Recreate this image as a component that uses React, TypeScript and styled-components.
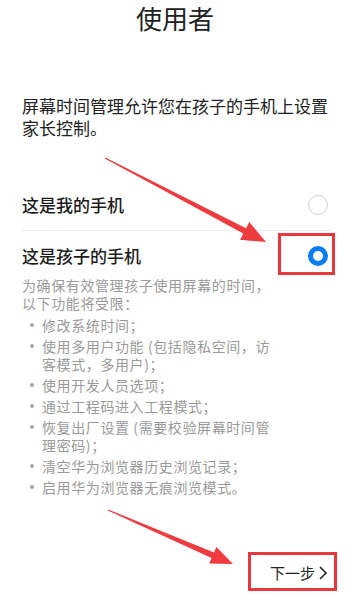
import styled, { createGlobalStyle } from 'styled-components';

const GlobalStyle = createGlobalStyle`
  html, body {
    margin: 0;
    padding: 0;
    background: #ffffff;
  }
  body {
    font-family: "Noto Sans CJK SC", "Noto Sans", sans-serif;
    color: #1c1c1c;
  }
`;

const restrictions = [
  '修改系统时间；',
  '使用多用户功能 (包括隐私空间，访客模式，多用户)；',
  '使用开发人员选项；',
  '通过工程码进入工程模式；',
  '恢复出厂设置 (需要校验屏幕时间管理密码)；',
  '清空华为浏览器历史浏览记录；',
  '启用华为浏览器无痕浏览模式。',
];

const App = () => {
  return (
    <Page>
      <GlobalStyle />
      <Title>使用者</Title>
      <Intro>屏幕时间管理允许您在孩子的手机上设置家长控制。</Intro>

      <OptionRow $height={50}>
        <OptionLabel>这是我的手机</OptionLabel>
        <Radio />
      </OptionRow>
      <Divider />
      <OptionRow $padTop={14}>
        <OptionLabel>这是孩子的手机</OptionLabel>
        <Radio $checked />
      </OptionRow>

      <Desc>为确保有效管理孩子使用屏幕的时间，以下功能将受限：</Desc>
      <List>
        {restrictions.map((item) => (
          <Item key={item}>{item}</Item>
        ))}
      </List>

      <Footer>
        <NextButton type="button">
          下一步
          <svg width="10" height="16" viewBox="0 0 10 16">
            <path d="M2 2 L8 8 L2 14" fill="none" stroke="#222" strokeWidth="1.6" />
          </svg>
        </NextButton>
      </Footer>

      <Marker style={{ left: 278, top: 233, width: 57, height: 42 }} />
      <Marker style={{ left: 248, top: 552, width: 89, height: 39 }} />
      <Arrows width="350" height="602" viewBox="0 0 350 602">
        {/* annotation arrows */}
        <polygon
          fill="#ee3b3f"
          points="105.3,157.5 246.1,228.2 249.3,222 266,242 240.1,239.8 243.3,233.6 104.7,158.5"
        />
        <polygon
          fill="#ee3b3f"
          points="108.2,509.4 214,552.5 216.4,547 233,564 209.2,563.6 211.6,558.1 107.8,510.6"
        />
      </Arrows>
    </Page>
  );
};

export default App;

const Page = styled.div`
  position: relative;
  display: flex;
  flex-direction: column;
  min-height: 100vh;
  box-sizing: border-box;
  overflow: hidden;
`;

const Title = styled.h1`
  margin: 0;
  font-size: 26px;
  font-weight: 400;
  line-height: 36px;
  text-align: center;
  color: #222;
`;

const Intro = styled.p`
  margin: 59px 18px 0 22px;
  font-size: 17px;
  line-height: 22px;
  color: #222;
`;

const OptionRow = styled.div<{ $height?: number; $padTop?: number }>`
  display: flex;
  align-items: center;
  justify-content: space-between;
  margin-top: ${(p) => (p.$height ? '41px' : '0')};
  height: ${(p) => (p.$height ? `${p.$height}px` : 'auto')};
  padding: ${(p) => p.$padTop ?? 0}px 22px 0 22px;
`;

const OptionLabel = styled.span`
  font-size: 17px;
  line-height: 22px;
  font-weight: 500;
  color: #1c1c1c;
`;

const Radio = styled.span<{ $checked?: boolean }>`
  box-sizing: border-box;
  width: 20px;
  height: 20px;
  border-radius: 50%;
  background: #fff;
  border: ${(p) => (p.$checked ? '5px solid #0a7cf6' : '1px solid #cfcfcf')};
`;

const Divider = styled.div`
  height: 1px;
  margin: 0 18px 0 22px;
  background: #ececec;
`;

const Desc = styled.p`
  margin: 9px 0 0 22px;
  width: 254px;
  font-size: 14px;
  line-height: 18px;
  letter-spacing: 0.6px;
  color: #9a9a9a;
`;

const List = styled.ul`
  margin: 4px 0 0 22px;
  padding: 0 0 0 20px;
  width: 234px;
  list-style: none;
`;

const Item = styled.li`
  position: relative;
  margin-bottom: 3px;
  font-size: 14px;
  line-height: 18px;
  letter-spacing: 0.6px;
  color: #9a9a9a;

  &::before {
    content: '';
    position: absolute;
    left: -12px;
    top: 7px;
    width: 4px;
    height: 4px;
    border-radius: 50%;
    background: #a8a8a8;
  }
`;

const Footer = styled.div`
  margin-top: auto;
  display: flex;
  justify-content: flex-end;
  padding: 0 22px 18px 0;
`;

const NextButton = styled.button`
  display: flex;
  align-items: center;
  gap: 3px;
  padding: 0;
  border: none;
  background: none;
  font-family: "Noto Sans CJK SC", sans-serif;
  font-size: 15px;
  line-height: 22px;
  color: #222;
`;

const Marker = styled.div`
  position: absolute;
  box-sizing: border-box;
  border: 3px solid #e8383d;
  pointer-events: none;
`;

const Arrows = styled.svg`
  position: absolute;
  left: 0;
  top: 0;
  pointer-events: none;
`;
